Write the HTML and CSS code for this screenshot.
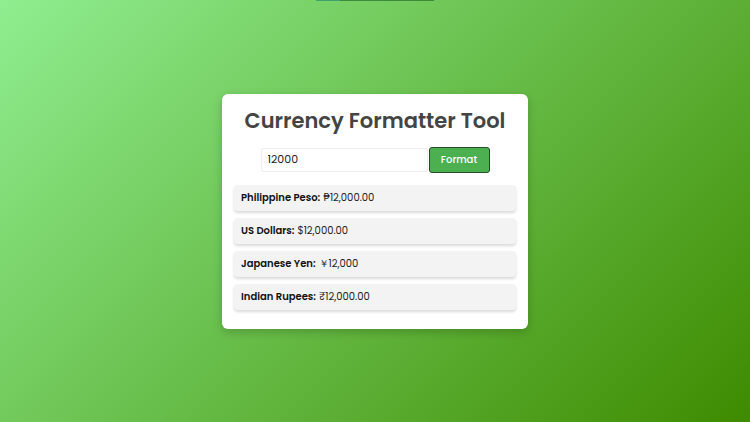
FILE: index.html
```html
<!DOCTYPE html>
<html lang="en">
<head>
<meta charset="utf-8">
<title>Currency Formatter Tool</title>
<link rel="stylesheet" href="styles.css">
</head>
<body>
<div class="topline"><span class="tl-a"></span><span class="tl-b"></span></div>
<main class="card">
  <h1 class="title">Currency Formatter Tool</h1>
  <div class="form-row">
    <input class="amount" type="text" value="12000">
    <button class="format-btn">Format</button>
  </div>
  <div class="results">
    <div class="result"><strong>Philippine Peso:</strong> ₱12,000.00</div>
    <div class="result"><strong>US Dollars:</strong> $12,000.00</div>
    <div class="result"><strong>Japanese Yen:</strong> ￥12,000</div>
    <div class="result"><strong>Indian Rupees:</strong> ₹12,000.00</div>
  </div>
</main>
</body>
</html>
```
FILE: styles.css
```css
html, body {
  margin: 0;
  height: 100%;
}
body {
  font-family: "Poppins", Inter, "Noto Sans", "DejaVu Sans", sans-serif;
  background: linear-gradient(135deg, #90ee90 0%, #3e8b00 100%);
  display: flex;
  align-items: center;
  justify-content: center;
  position: relative;
}
.topline {
  position: absolute;
  top: 0;
  left: 316px;
  width: 118px;
  height: 1px;
  display: flex;
}
.tl-a { width: 24px; background: #3fa070; }
.tl-b { flex: 1; background: #3c8a3a; }
.card {
  width: 282px;
  padding: 12px;
  background: #fff;
  border-radius: 6px;
  box-shadow: 0 3px 10px rgba(0, 0, 0, 0.2);
}
.title {
  margin: 0 -10px 11px;
  font-size: 21px;
  line-height: 30px;
  font-weight: 600;
  color: #444;
  text-align: center;
  white-space: nowrap;
}
.form-row {
  display: flex;
  justify-content: center;
  align-items: center;
  margin-bottom: 12px;
}
.amount {
  width: 167px;
  height: 24px;
  box-sizing: border-box;
  border: 1px solid #eee;
  border-radius: 2px;
  padding: 0 6px;
  font-family: inherit;
  font-size: 11px;
  color: #222;
  outline: none;
}
.format-btn {
  width: 61px;
  height: 26px;
  margin-left: 1px;
  background: #4caf50;
  color: #fff;
  border: 1px solid #264d26;
  border-radius: 3px;
  font-family: inherit;
  font-size: 10px;
  font-weight: 500;
  padding: 0;
}
.results {
  display: flex;
  flex-direction: column;
  gap: 7px;
  margin-bottom: 7px;
}
.result {
  height: 26px;
  box-sizing: border-box;
  padding: 0 7px;
  display: flex;
  align-items: center;
  gap: 3px;
  background: #f3f3f3;
  border-radius: 4px;
  box-shadow: 0 2px 3px rgba(0, 0, 0, 0.15);
  font-size: 10px;
  color: #222;
  white-space: nowrap;
}
.result strong {
  font-weight: 600;
  color: #111;
}
```
